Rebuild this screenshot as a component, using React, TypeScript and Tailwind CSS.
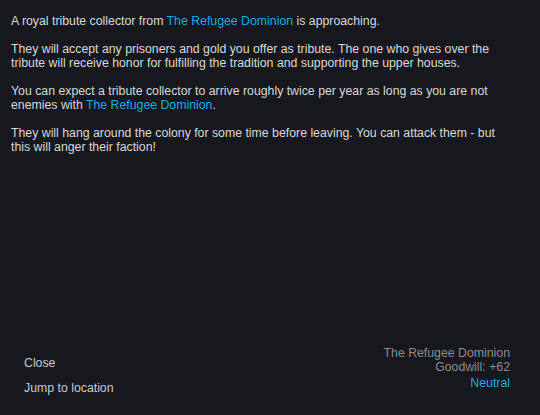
export default function App() {
  const blue = "text-[#1aa8e0]";
  return (
    <div className="w-[540px] h-[415px] bg-[#16181d] text-[#d9d9d9] text-[12.3px] leading-[14px] flex flex-col font-['Liberation_Sans',Arial,sans-serif]">
      {/* Letter body */}
      <div className="flex-1 px-[11px] pt-[14px] flex flex-col gap-[14px]">
        <p>
          A royal tribute collector from <span className={blue}>The Refugee Dominion</span> is approaching.
        </p>
        <p>
          They will accept any prisoners and gold you offer as tribute. The one who gives over the
          <br />
          tribute will receive honor for fulfilling the tradition and supporting the upper houses.
        </p>
        <p>
          You can expect a tribute collector to arrive roughly twice per year as long as you are not
          <br />
          enemies with <span className={blue}>The Refugee Dominion</span>.
        </p>
        <p>
          They will hang around the colony for some time before leaving. You can attack them - but
          <br />
          this will anger their faction!
        </p>
      </div>

      {/* Footer */}
      <div className="flex justify-between items-start pb-[20px]">
        <div className="flex flex-col pl-[24px] pt-[10px] gap-[11px] text-[#c6cad2]">
          <span>Close</span>
          <span>Jump to location</span>
        </div>
        <div className="flex flex-col items-end pr-[30px] text-[#8c8c8c]">
          <span>The Refugee Dominion</span>
          <span>Goodwill: +62</span>
          <span className={`${blue} mt-[2px]`}>Neutral</span>
        </div>
      </div>
    </div>
  );
}
